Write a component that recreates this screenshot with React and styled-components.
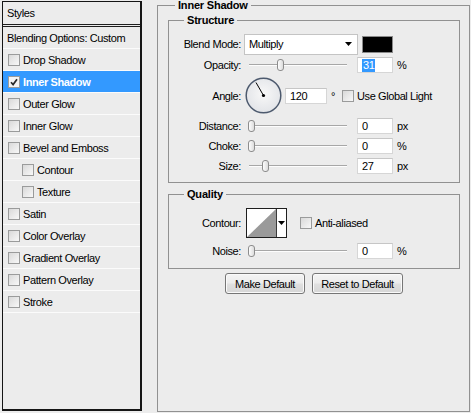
import styled, { createGlobalStyle } from "styled-components";

const GlobalStyle = createGlobalStyle`
  html, body {
    margin: 0;
    padding: 0;
    background: #ececec;
  }
  body {
    font-family: "Liberation Sans", Arial, sans-serif;
    font-size: 11px;
    color: #000;
  }
`;

const Dialog = styled.div`
  width: 471px;
  height: 413px;
  box-sizing: border-box;
  padding: 1px 1px 0 2px;
  display: flex;
  align-items: flex-start;
  gap: 15px;
  background: #ececec;
  overflow: hidden;
  letter-spacing: -0.4px;
`;

/* ---------- left list ---------- */

const StylesPanel = styled.div`
  width: 140px;
  height: 410px;
  box-sizing: border-box;
  border: 1px solid #151515;
  border-right-width: 2px;
  border-bottom-width: 2px;
  display: flex;
  flex-direction: column;
`;

const PanelHeader = styled.div`
  height: 22px;
  padding-left: 4px;
  display: flex;
  align-items: center;
  border-bottom: 3px double #1e1e1e;
`;

const ListRow = styled.div`
  height: 21px;
  display: flex;
  align-items: center;
  gap: 3px;
  padding-left: ${(p) => p.$indent}px;
  border-bottom: 1px solid #fbfbfb;
  background: ${(p) => (p.$active ? "#3399ff" : "transparent")};
  color: ${(p) => (p.$active ? "#fff" : "#000")};
  font-weight: ${(p) => (p.$active ? "bold" : "normal")};
`;

const Box = styled.span`
  width: 12px;
  height: 12px;
  box-sizing: border-box;
  flex-shrink: 0;
  margin-left: ${(p) => p.$ml || 0}px;
  border: 1px solid #9a9b9b;
  background: ${(p) =>
    p.$checked ? "#f4f4f4" : "linear-gradient(135deg, #d9d9d9, #f8f8f8)"};
  display: flex;
  align-items: center;
  justify-content: center;
`;

const Check = ({ checked, ml }) => (
  <Box $checked={checked} $ml={ml}>
    {checked && (
      <svg width="8" height="8" viewBox="0 0 8 8">
        <path d="M1 4.2 L3.1 6.6 L7 1.2" fill="none" stroke="#2a2a2a" strokeWidth="1.7" />
      </svg>
    )}
  </Box>
);

/* ---------- right side ---------- */

const Group = styled.fieldset`
  margin: ${(p) => p.$mt || 0}px 0 0 0;
  padding: 0;
  border: 1px solid #919191;
  min-width: 0;
  box-sizing: border-box;
  height: ${(p) => (p.$h ? `${p.$h}px` : "auto")};
  width: ${(p) => p.$w}px;
`;

const Legend = styled.legend`
  margin-left: ${(p) => p.$inset}px;
  padding: 0 3px;
  font-weight: bold;
  line-height: 13px;
  letter-spacing: -0.2px;
`;

const OuterBody = styled.div`
  padding: 2px 9px 0 10px;
`;

const GroupBody = styled.div`
  padding: ${(p) => p.$pt}px 0 ${(p) => p.$pb}px 0;
`;

const Row = styled.div`
  display: flex;
  align-items: center;
  height: ${(p) => p.$h}px;
  margin-top: ${(p) => p.$mt || 0}px;
`;

const Label = styled.span`
  width: 72px;
  flex-shrink: 0;
  text-align: right;
`;

const Select = styled.div`
  width: 114px;
  height: 21px;
  margin-left: 3px;
  box-sizing: border-box;
  border: 1px solid #c4c4c4;
  background: #fff;
  display: flex;
  align-items: center;
  justify-content: space-between;
  padding: 0 5px 0 4px;
`;

const Swatch = styled.div`
  width: 31px;
  height: 17px;
  margin-left: 4px;
  box-sizing: border-box;
  border: 1px solid #8a8a8a;
  background: #000;
`;

const Track = styled.div`
  position: relative;
  width: 99px;
  height: 14px;
  margin-left: 7px;
  flex-shrink: 0;
  &::before {
    content: "";
    position: absolute;
    left: 1px;
    right: 0;
    top: 6px;
    height: 1px;
    background: #a7a7a7;
    box-shadow: 0 1px 0 #fdfdfd;
  }
`;

const Thumb = styled.span`
  position: absolute;
  top: 1px;
  left: ${(p) => p.$frac * 93}px;
  width: 7px;
  height: 12px;
  box-sizing: border-box;
  border: 1px solid #8d8d8d;
  border-radius: 3px;
  background: linear-gradient(90deg, #fdfdfd, #dcdcdc);
`;

const Field = styled.div`
  width: ${(p) => p.$w}px;
  height: 16px;
  margin-left: ${(p) => p.$ml}px;
  box-sizing: border-box;
  border: 1px solid #d6d6d6;
  border-top-color: #c6c6c6;
  background: #fff;
  display: flex;
  align-items: center;
  padding-left: 4px;
  flex-shrink: 0;
`;

const Highlight = styled.span`
  background: #3399ff;
  color: #fff;
  padding: 0 1px;
  line-height: 13px;
`;

const Unit = styled.span`
  margin-left: ${(p) => p.$ml || 4}px;
`;

const Dial = styled.svg`
  margin-left: 4px;
  flex-shrink: 0;
`;

const CheckLabel = styled.span`
  margin-left: 3px;
`;

const ContourPicker = styled.div`
  width: 41px;
  height: 30px;
  margin-left: 5px;
  box-sizing: border-box;
  border: 1px solid #1e1e1e;
  background: #fff;
  display: flex;
  flex-shrink: 0;
`;

const ContourArrow = styled.div`
  flex: 1;
  border-left: 1px solid #3a3a3a;
  display: flex;
  align-items: center;
  justify-content: center;
`;

const ButtonRow = styled.div`
  display: flex;
  justify-content: center;
  gap: 7px;
  margin-top: 4px;
`;

const Button = styled.button`
  width: ${(p) => p.$w}px;
  height: 21px;
  padding: 0;
  font: inherit;
  letter-spacing: inherit;
  color: #000;
  border: 1px solid #767676;
  border-radius: 3px;
  background: linear-gradient(#f4f4f4, #ececec 48%, #e0e0e0 52%, #d6d6d6);
  box-shadow: inset 0 0 0 1px #fafafa;
`;

const DownArrow = () => (
  <svg width="7" height="4" viewBox="0 0 7 4">
    <path d="M0 0 H7 L3.5 4 Z" fill="#000" />
  </svg>
);

const layers = [
  { name: "Drop Shadow" },
  { name: "Inner Shadow", checked: true, active: true },
  { name: "Outer Glow" },
  { name: "Inner Glow" },
  { name: "Bevel and Emboss" },
  { name: "Contour", sub: true },
  { name: "Texture", sub: true },
  { name: "Satin" },
  { name: "Color Overlay" },
  { name: "Gradient Overlay" },
  { name: "Pattern Overlay" },
  { name: "Stroke" },
];

const SliderRow = ({ label, frac, value, unit, selected }) => (
  <Row $h={20}>
    <Label>{label}:</Label>
    <Track>
      <Thumb $frac={frac} />
    </Track>
    <Field $w={36} $ml={10}>
      {selected ? <Highlight>{value}</Highlight> : value}
    </Field>
    <Unit>{unit}</Unit>
  </Row>
);

export default function App() {
  return (
    <>
      <GlobalStyle />
      <Dialog>
        <StylesPanel>
          <PanelHeader>Styles</PanelHeader>
          <ListRow $indent={4}>Blending Options: Custom</ListRow>
          {layers.map((l) => (
            <ListRow key={l.name} $indent={l.sub ? 19 : 5} $active={l.active}>
              <Check checked={l.checked} />
              {l.name}
            </ListRow>
          ))}
        </StylesPanel>

        <Group $w={313} $h={413} $mt={-2}>
          <Legend $inset={17}>Inner Shadow</Legend>
          <OuterBody>
            <Group $w={292}>
              <Legend $inset={15}>Structure</Legend>
              <GroupBody $pt={6} $pb={6}>
                <Row $h={22}>
                  <Label>Blend Mode:</Label>
                  <Select>
                    Multiply
                    <DownArrow />
                  </Select>
                  <Swatch />
                </Row>
                <SliderRow label="Opacity" frac={0.31} value="31" unit="%" selected />
                <Row $h={41}>
                  <Label>Angle:</Label>
                  <Dial width="37" height="37" viewBox="0 0 37 37">
                    <defs>
                      <radialGradient id="dialFill" cx="50%" cy="45%" r="55%">
                        <stop offset="0" stopColor="#f8f8f8" />
                        <stop offset="1" stopColor="#e2e4e8" />
                      </radialGradient>
                    </defs>
                    <circle cx="18.5" cy="18.5" r="17.3" fill="url(#dialFill)" stroke="#4d5a6e" strokeWidth="1.5" />
                    <line x1="18.5" y1="18.5" x2="11" y2="5.5" stroke="#000" strokeWidth="1" />
                    <circle cx="18.5" cy="18.5" r="1.6" fill="#000" />
                  </Dial>
                  <Field $w={42} $ml={3}>120</Field>
                  <Unit $ml={4}>°</Unit>
                  <Check ml={7} />
                  <CheckLabel>Use Global Light</CheckLabel>
                </Row>
                <SliderRow label="Distance" frac={0} value="0" unit="px" />
                <SliderRow label="Choke" frac={0} value="0" unit="%" />
                <SliderRow label="Size" frac={0.15} value="27" unit="px" />
              </GroupBody>
            </Group>

            <Group $w={292} $mt={5}>
              <Legend $inset={15}>Quality</Legend>
              <GroupBody $pt={7} $pb={6}>
                <Row $h={30}>
                  <Label>Contour:</Label>
                  <ContourPicker>
                    <svg width="29" height="28" viewBox="0 0 29 28">
                      <polygon points="0,28 29,0 29,28" fill="#9a9a9a" />
                    </svg>
                    <ContourArrow>
                      <DownArrow />
                    </ContourArrow>
                  </ContourPicker>
                  <Check ml={13} />
                  <CheckLabel>Anti-aliased</CheckLabel>
                </Row>
                <Row $h={22} $mt={2}>
                  <Label>Noise:</Label>
                  <Track>
                    <Thumb $frac={0} />
                  </Track>
                  <Field $w={36} $ml={10}>0</Field>
                  <Unit>%</Unit>
                </Row>
              </GroupBody>
            </Group>

            <ButtonRow>
              <Button $w={80}>Make Default</Button>
              <Button $w={91}>Reset to Default</Button>
            </ButtonRow>
          </OuterBody>
        </Group>
      </Dialog>
    </>
  );
}
